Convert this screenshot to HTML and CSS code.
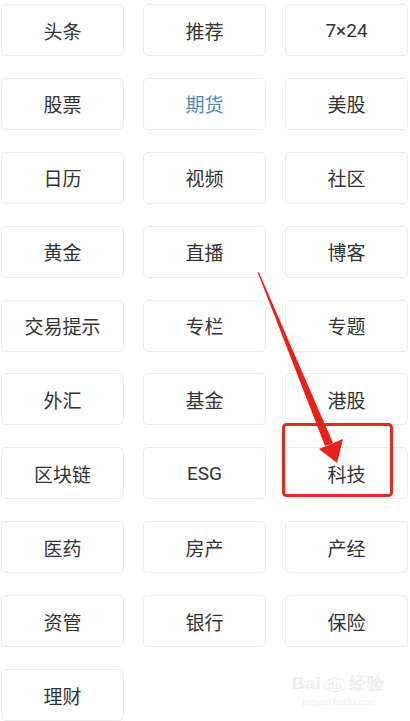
FILE: index.html
```html
<!DOCTYPE html>
<html lang="zh">
<head>
    <meta charset="UTF-8">
    <meta name="viewport" content="width=device-width, initial-scale=1.0">
    <title>频道</title>
    <link rel="stylesheet" href="styles.css">
</head>
<body>
    <div class="channels">
        <div class="chip">头条</div>
        <div class="chip">推荐</div>
        <div class="chip">7×24</div>
        <div class="chip">股票</div>
        <div class="chip active">期货</div>
        <div class="chip">美股</div>
        <div class="chip">日历</div>
        <div class="chip">视频</div>
        <div class="chip">社区</div>
        <div class="chip">黄金</div>
        <div class="chip">直播</div>
        <div class="chip">博客</div>
        <div class="chip">交易提示</div>
        <div class="chip">专栏</div>
        <div class="chip">专题</div>
        <div class="chip">外汇</div>
        <div class="chip">基金</div>
        <div class="chip">港股</div>
        <div class="chip">区块链</div>
        <div class="chip">ESG</div>
        <div class="chip">科技</div>
        <div class="chip">医药</div>
        <div class="chip">房产</div>
        <div class="chip">产经</div>
        <div class="chip">资管</div>
        <div class="chip">银行</div>
        <div class="chip">保险</div>
        <div class="chip">理财</div>
    </div>

    <!-- annotation drawn over the screenshot -->
    <svg class="markup" width="410" height="721" viewBox="0 0 410 721">
        <rect x="283.5" y="424.5" width="108" height="71" rx="3" fill="none" stroke="#e02b22" stroke-width="3"/>
        <polygon points="257.5,272 259,272.5 333,443 325,446" fill="#e8221b"/>
        <polygon points="319,449 343,439 337,463" fill="#e8221b"/>
    </svg>

    <div class="watermark">
        <div class="wm-logo">Bai<span class="paw">du</span>经验</div>
        <div class="wm-url">jingyan.baidu.com</div>
    </div>
</body>
</html>
```

FILE: styles.css
```css
body {
    margin: 0;
    background: #fff;
    font-family: Roboto, "Noto Sans CJK SC", sans-serif;
    position: relative;
    width: 410px;
    height: 721px;
    overflow: hidden;
}
.channels {
    display: grid;
    grid-template-columns: repeat(3, 123px);
    grid-auto-rows: 52px;
    column-gap: 19px;
    row-gap: 21.9px;
    padding: 4px 2px 0 1px;
}
.chip {
    display: flex;
    align-items: center;
    justify-content: center;
    border: 1px solid #ececec;
    border-radius: 5px;
    font-size: 19px;
    color: #333;
    box-sizing: border-box;
}
.chip.active {
    color: #4f88c6;
}
.markup {
    position: absolute;
    left: 0;
    top: 0;
    pointer-events: none;
}
.watermark {
    position: absolute;
    left: 292px;
    top: 672px;
    color: #eeeeee;
    text-align: center;
    font-family: "Liberation Sans", sans-serif;
}
.wm-logo {
    font-size: 17px;
    font-weight: bold;
    letter-spacing: 1px;
}
.paw {
    display: inline-block;
    border: 1px solid #eeeeee;
    border-radius: 50%;
    font-size: 11px;
    padding: 0 2px;
    margin: 0 3px;
}
.wm-url {
    font-size: 9px;
    margin-top: 2px;
}
```
